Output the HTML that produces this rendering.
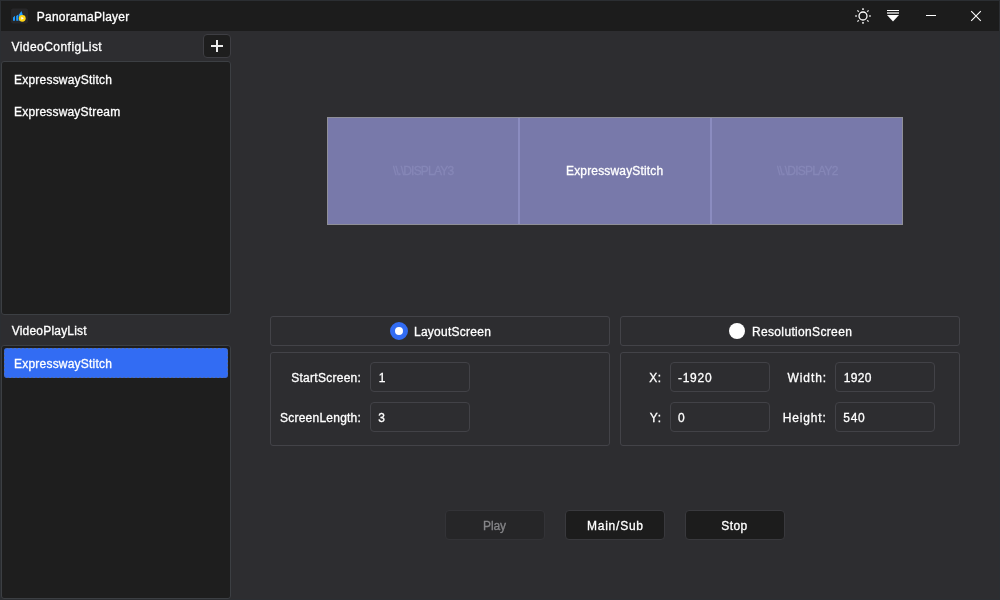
<!DOCTYPE html>
<html><head><meta charset="utf-8"><title>PanoramaPlayer</title>
<style>
*{box-sizing:border-box;margin:0;padding:0}
html,body{width:1000px;height:600px;overflow:hidden;background:#2d2d30}
body{font-family:"Liberation Sans",sans-serif;font-size:12px;color:#fff;position:relative}
.abs{position:absolute}
#titlebar{left:0;top:0;width:1000px;height:31px;background:#1c1c1c}
.t{position:absolute;white-space:nowrap;line-height:16px;color:#fff;-webkit-text-stroke:0.3px currentColor}
.list{background:#1e1e1e;border:1px solid #3c3f43;border-radius:3px}
.panel{border:1px solid #434348;border-radius:3px}
.inp{background:#2d2d30;border:1px solid #424247;border-radius:4px;height:30px;width:100px}
.btn{border:1px solid #39393d;border-radius:4px;background:#1c1c1c;height:30px;width:100px}
</style></head><body>
<div id="titlebar" class="abs"></div>
<svg class="abs" style="left:10px;top:8px" width="18" height="16" viewBox="0 0 18 16">
<rect x="1" y="0.5" width="17" height="15" rx="2" fill="#272729"/>
<path d="M3 12.7V9.5l2-1.7v4.9zM6.2 12.7V8l2.2-1.6v6.3zM9 12.7V6.5l2.4-3.6 1.3 3.6v6.2z" fill="#1e9bff"/>
<circle cx="12.3" cy="10.3" r="3.4" fill="#ffd515"/>
<path d="M11.3 8.8l2.6 1.5-2.6 1.5z" fill="#fff"/>
</svg>
<!-- window icons -->
<svg class="abs" style="left:852px;top:5px" width="22" height="22" viewBox="0 0 22 22" fill="none" stroke="#fff">
<circle cx="11" cy="11" r="4.0" stroke-width="1.3"/>
<g stroke-width="1.7" stroke-linecap="butt" stroke="#ddd"><path d="M11 3.2v1.7M11 17.1v1.7M3.2 11h1.7M17.1 11h1.7"/><path stroke-width="1.3" d="M5.4 5.4l1.4 1.4M15.2 15.2l1.4 1.4M5.4 16.6l1.4-1.4M15.2 6.8l1.4-1.4"/></g>
</svg>
<svg class="abs" style="left:885px;top:8px" width="16" height="16" viewBox="0 0 16 16">
<rect x="2" y="2" width="12" height="1" fill="#fff"/><rect x="2" y="4" width="12" height="2" fill="#aaa"/>
<path d="M2 7h12l-6 6.4z" fill="#fff"/></svg>
<div class="abs" style="left:926px;top:15px;width:10px;height:1px;background:#fff"></div>
<svg class="abs" style="left:970px;top:10px" width="12" height="12" viewBox="0 0 12 12"><path d="M1.2 1.2l9.6 9.6M10.8 1.2l-9.6 9.6" stroke="#fff" stroke-width="1.1"/></svg>

<!-- left -->
<div class="abs" style="left:203px;top:34px;width:28px;height:24px;background:#1e1e1e;border-radius:4px;border:1px solid #3e3e43"></div>
<div class="abs" style="left:211px;top:45px;width:12px;height:2px;background:#ececec"></div>
<div class="abs" style="left:216px;top:40px;width:2px;height:12px;background:#ececec"></div>
<div class="abs list" style="left:1px;top:61px;width:230px;height:254px"></div>
<div class="abs list" style="left:1px;top:345px;width:230px;height:254px"></div>
<div class="abs" style="left:4px;top:348px;width:224px;height:30px;background:#326cf3;border-radius:3px"></div>
<svg class="abs" style="left:4px;top:348px" width="224" height="30"><rect x="0.5" y="0.5" width="223" height="29" rx="3" fill="none" stroke="#566c9e" stroke-dasharray="2 2" stroke-dashoffset="3.5"/></svg>

<!-- screens -->
<div class="abs" style="left:327px;top:117px;width:576px;height:108px;background:#7879aa;border:1px solid #8f8f98"></div>
<div class="abs" style="left:518px;top:118px;width:2px;height:106px;background:#8b8cc0"></div>
<div class="abs" style="left:710px;top:118px;width:2px;height:106px;background:#8b8cc0"></div>

<!-- panels -->
<div class="abs panel" style="left:270px;top:316px;width:340px;height:30px"></div>
<div class="abs panel" style="left:620px;top:316px;width:340px;height:30px"></div>
<div class="abs panel" style="left:270px;top:352px;width:340px;height:94px"></div>
<div class="abs panel" style="left:620px;top:352px;width:340px;height:94px"></div>
<div class="abs" style="left:390px;top:322px;width:18px;height:18px;border-radius:50%;background:#fff;border:5px solid #326cf3"></div>
<div class="abs" style="left:729px;top:323px;width:16px;height:16px;border-radius:50%;background:#fff"></div>

<div class="abs inp" style="left:370px;top:362px"></div>
<div class="abs inp" style="left:370px;top:402px"></div>
<div class="abs inp" style="left:670px;top:362px"></div>
<div class="abs inp" style="left:670px;top:402px"></div>
<div class="abs inp" style="left:835px;top:362px"></div>
<div class="abs inp" style="left:835px;top:402px"></div>

<div class="abs btn" style="left:445px;top:510px;background:#262628;border-color:#333337"></div>
<div class="abs btn" style="left:565px;top:510px"></div>
<div class="abs btn" style="left:685px;top:510px"></div>
<div class="abs" id="tx" style="left:0;top:0;width:1000px;height:600px;will-change:transform">
<div class="t" id="t1" style="left:36.75px;top:9px;letter-spacing:0.238px">PanoramaPlayer</div>
<div class="t" id="t2" style="left:11.50px;top:39px;letter-spacing:0.454px">VideoConfigList</div>
<div class="t" id="t3" style="left:14.00px;top:72px;letter-spacing:0.213px">ExpresswayStitch</div>
<div class="t" id="t4" style="left:14.00px;top:104px;letter-spacing:0.187px">ExpresswayStream</div>
<div class="t" id="t5" style="left:11.75px;top:323px;letter-spacing:0.200px">VideoPlayList</div>
<div class="t" id="t6" style="left:14.00px;top:356px;letter-spacing:0.213px">ExpresswayStitch</div>
<div class="t" id="t7" style="left:393.00px;top:163px;letter-spacing:-0.782px;color:#8687b7">\\.\DISPLAY3</div>
<div class="t" id="t8" style="left:566.00px;top:163px;letter-spacing:0.160px">ExpresswayStitch</div>
<div class="t" id="t9" style="left:777.00px;top:163px;letter-spacing:-0.773px;color:#8687b7">\\.\DISPLAY2</div>
<div class="t" id="t10" style="left:414.00px;top:324px;letter-spacing:0.259px">LayoutScreen</div>
<div class="t" id="t11" style="left:752.00px;top:324px;letter-spacing:0.340px">ResolutionScreen</div>
<div class="t" id="t12" style="left:291.25px;top:370px;letter-spacing:0.268px">StartScreen:</div>
<div class="t" id="t13" style="left:280.00px;top:410px;letter-spacing:0.233px">ScreenLength:</div>
<div class="t" id="t14" style="left:378.75px;top:370px">1</div>
<div class="t" id="t15" style="left:378.25px;top:410px">3</div>
<div class="t" id="t16" style="left:649.25px;top:370px;letter-spacing:0.450px">X:</div>
<div class="t" id="t17" style="left:649.75px;top:410px;letter-spacing:0.750px">Y:</div>
<div class="t" id="t18" style="left:678.00px;top:370px;letter-spacing:0.725px">-1920</div>
<div class="t" id="t19" style="left:678.00px;top:410px">0</div>
<div class="t" id="t20" style="left:787.50px;top:370px;letter-spacing:0.940px">Width:</div>
<div class="t" id="t21" style="left:782.75px;top:410px;letter-spacing:0.825px">Height:</div>
<div class="t" id="t22" style="left:843.75px;top:370px;letter-spacing:0.333px">1920</div>
<div class="t" id="t23" style="left:843.25px;top:410px;letter-spacing:0.750px">540</div>
<div class="t" id="t24" style="left:483.00px;top:518px;letter-spacing:-0.083px;color:#858588">Play</div>
<div class="t" id="t25" style="left:587.00px;top:518px;letter-spacing:0.757px">Main/Sub</div>
<div class="t" id="t26" style="left:721.25px;top:518px;letter-spacing:0.450px">Stop</div>
</div>
<div class="abs" style="left:0;top:0;width:1000px;height:600px;border:1px solid #2b2e32;pointer-events:none"></div>
</body></html>
